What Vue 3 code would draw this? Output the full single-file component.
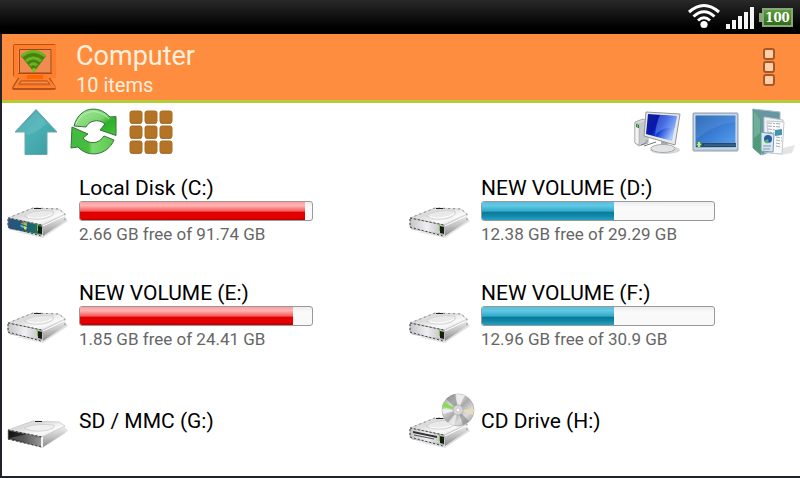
<script setup>

import { ref } from "vue";

const drives = ref([
  { name: "Local Disk (C:)", info: "2.66 GB free of 91.74 GB", used: 97, color: "red", type: "system" },
  { name: "NEW VOLUME (D:)", info: "12.38 GB free of 29.29 GB", used: 57, color: "blue", type: "hdd" },
  { name: "NEW VOLUME (E:)", info: "1.85 GB free of 24.41 GB", used: 92, color: "red", type: "hdd" },
  { name: "NEW VOLUME (F:)", info: "12.96 GB free of 30.9 GB", used: 57, color: "blue", type: "hdd" },
  { name: "SD / MMC (G:)", type: "card" },
  { name: "CD Drive (H:)", type: "cd" }
]);

</script>


<template>
  <div class="screen">
    <div class="status-bar">
      <!-- wifi -->
      <svg class="wifi" width="32" height="26" viewBox="0 0 32 26">
        <g fill="none" stroke="#fff" stroke-width="3">
          <path d="M1 9Q16 -4 31 9" />
          <path d="M5.500 13.500Q16 4 26.500 13.500" />
          <path d="M10 17.500Q16 12 22 17.500" />
        </g>
        <circle cx="16" cy="21.500" r="3.600" fill="#fff" />
      </svg>
      <!-- signal -->
      <svg class="signal" width="28" height="22" viewBox="0 0 28 22">
        <path d="M0 17h4v5h-4zM6 13h4v9h-4zM12 9h4v13h-4zM18 5h4v17h-4zM24 0h4v22h-4z" fill="#f4f4f4" />
      </svg>
      <div class="battery">100</div>
    </div>

    <div class="window">
      <header>
        <svg class="logo" width="48" height="52" viewBox="0 0 48 52">
          <g fill="none" stroke="#b5521b" stroke-width="4" stroke-linejoin="round">
            <path d="M5 5H44V34H5z" />
            <path d="M10 37L4 47H44L38 37" />
          </g>
          <path d="M6 6H44V35H6z" fill="none" stroke="#ff7d2b" stroke-width="4" />
          <path d="M9.500 8.500H41V32H9.500z" fill="#f08c50" stroke="#95481d" stroke-width="1" />
          <path d="M10 38L5 46H44L38 38z" fill="#f67426" stroke="#ff8130" stroke-width="2" />
          <path d="M11 40H37L40 43H9z" fill="#ff8b40" stroke="#b5521b" stroke-width="1" />
          <path d="M17 36h16" stroke="#ff6500" stroke-width="4" />
          <path d="M11 15Q23 5 36 15L24 31z" fill="#4a7f16" />
          <g fill="none" stroke="#69b51b" stroke-width="3">
            <path d="M12 15Q23 6 35 15" />
            <path d="M16 20Q23 14 31 20" />
            <path d="M20 24.500Q23.500 21 27 24.500" />
          </g>
          <circle cx="24" cy="29" r="2" fill="#79c51c" />
        </svg>
        <div class="heading">
          <h1>Computer</h1>
          <p>10 items</p>
        </div>
        <button class="menu-button" aria-label="Menu">
          <span></span><span></span><span></span>
        </button>
      </header>

      <nav>
        <button class="tool" aria-label="Up">
          <svg width="48" height="48" viewBox="0 0 48 48">
            <defs>
              <linearGradient id="upFill" x1="0" y1="0" x2="1" y2="1">
                <stop offset="0" stop-color="#3b8f98" />
                <stop offset=".45" stop-color="#4bb0b4" />
                <stop offset="1" stop-color="#3a9ba0" />
              </linearGradient>
            </defs>
            <path d="M24 1.500L45 24H35V46.500H13V24H3z" fill="url(#upFill)" stroke="#68a9ae" />
            <path d="M14 24H4L24 3L35 15Q25 25 14 27z" fill="#7cccd0" opacity=".35" />
          </svg>
        </button>
        <button class="tool" aria-label="Refresh">
          <svg width="48" height="48" viewBox="0 0 48 48">
            <defs>
              <linearGradient id="greenTop" x1="0" y1="0" x2="1" y2="1">
                <stop offset="0" stop-color="#a5e89d" />
                <stop offset=".5" stop-color="#7bd670" />
                <stop offset=".65" stop-color="#2eae2b" />
                <stop offset="1" stop-color="#49c43b" />
              </linearGradient>
              <linearGradient id="greenBottom" x1="0" y1="0" x2="1" y2="0">
                <stop offset="0" stop-color="#45b943" />
                <stop offset=".4" stop-color="#45bd3e" />
                <stop offset=".5" stop-color="#7bda6c" />
                <stop offset="1" stop-color="#59c84d" />
              </linearGradient>
            </defs>
            <path d="M4 18C9 -1 28 -4 40 9L46 8.500V27.500L30 22L35 16C28 10 19 13 16 19z" fill="url(#greenTop)" stroke="#36733a" stroke-linejoin="round" />
            <path d="M2 19L18 26L13 30C19 37 29 36 34 28L44 32C37 48 18 50 8 39L1 40z" fill="url(#greenBottom)" stroke="#36733a" stroke-linejoin="round" />
            <path d="M6 16C13 1 29 0 39 11" fill="none" stroke="#c4f3bd" opacity=".8" />
          </svg>
        </button>
        <button class="tool" aria-label="Grid view">
          <svg width="48" height="48" viewBox="0 0 48 48">
            <g v-for="y in [4, 19, 34]" :key="y">
              <g v-for="x in [2, 17, 32]" :key="x">
                <rect :x="x" :y="y" width="12" height="12" rx="2" fill="#96887a" />
                <rect :x="x" :y="y - 1" width="12" height="12" rx="2" fill="#b57425" stroke="#a96b25" />
              </g>
            </g>
          </svg>
        </button>

        <button class="tool right" aria-label="Computer">
          <svg width="48" height="48" viewBox="0 0 48 48">
            <defs>
              <linearGradient id="blueScreen" x1="0" y1="0" x2="1" y2=".5">
                <stop offset="0" stop-color="#10219c" />
                <stop offset=".4" stop-color="#0717ac" />
                <stop offset=".6" stop-color="#1742d5" />
                <stop offset="1" stop-color="#a7c8ff" />
              </linearGradient>
            </defs>
            <ellipse cx="31" cy="42" rx="15" ry="4" fill="#d8d8d8" />
            <path d="M1 14L9 11L14 13V35L5 38L1 35z" fill="#d8dada" stroke="#a6a8a9" />
            <path d="M5 15L14 12V35L5 38z" fill="#c6c9cb" />
            <path d="M1 15L5 16V37L1 35z" fill="#f4f4f4" stroke="#959595" stroke-width=".5" />
            <path d="M2 16l3 1v3l-3-1z" fill="#265b32" />
            <circle cx="3.500" cy="18" r="1" fill="#40e349" />
            <path d="M7 37Q14 35 13 32M10 38L22 34" fill="none" stroke="#777" stroke-width="1" />
            <path d="M27 30L34 32V40H27z" fill="#a9aaac" />
            <ellipse cx="29" cy="40.500" rx="12" ry="4" fill="#e3e4e5" stroke="#aaa" />
            <path d="M12 4L46 6L41 37L10 28z" fill="#e8e9eb" stroke="#949699" />
            <path d="M14 6L43 8L38 33L12 26z" fill="url(#blueScreen)" />
            <path d="M26 7L43 8L41 20Q30 19 23 25L21 28Q22 15 26 7z" fill="#7ea7f6" opacity=".45" />
          </svg>
        </button>
        <button class="tool" aria-label="Desktop">
          <svg width="48" height="48" viewBox="0 0 48 48">
            <defs>
              <linearGradient id="desk" x1="0" y1="0" x2="1" y2="1">
                <stop offset="0" stop-color="#1f5ca8" />
                <stop offset=".5" stop-color="#397dd4" />
                <stop offset="1" stop-color="#5ba4ee" />
              </linearGradient>
            </defs>
            <rect x="1" y="5" width="45" height="38" rx="1" fill="#b8c9da" stroke="#929dac" />
            <rect x="3" y="7" width="41" height="33" fill="url(#desk)" stroke="#dbe5ef" />
            <path d="M4 8H43V14Q23 16 4 31z" fill="#87b5eb" opacity=".2" />
            <path d="M4 35H44V39H4z" fill="#284c68" />
            <path d="M12 37H44" stroke="#47738f" />
            <circle cx="7" cy="36" r="3" fill="#4d8e75" />
            <path d="M6 34h2v2h1v1h-1v2h-2v-2h-1v-1h1z" fill="#c9e77a" />
          </svg>
        </button>
        <button class="tool" aria-label="Documents">
          <svg width="48" height="48" viewBox="0 0 48 48">
            <path d="M33 40L45 37L42 45L31 47z" fill="#e4e4e4" />
            <path d="M3 1L30 4V40L12 47z" fill="#6796a2" stroke="#9ebdc4" />
            <path d="M14 9L33 12L31 46L14 44z" fill="#eef2f5" stroke="#bac3c9" />
            <path d="M17 13L34 14L32 46L19 45z" fill="#f8fafc" stroke="#c2cacd" />
            <g stroke="#a8adb2" stroke-width="1" stroke-dasharray="4 1 2 1">
              <path d="M18 15l13 1M18 18l13 1M18 21l7 1M18 24l7 1M26 29l6 1M26 32l6 1M26 35l5 1M26 38l5 1" />
            </g>
            <path d="M25 22l7-1v6l-7 1z" fill="#4195ad" />
            <path d="M10 24L24 26L23 44L10 43z" fill="#d6e7f2" stroke="#779dba" />
            <circle cx="18" cy="31" r="4" fill="#2a5ba5" />
            <path d="M18 31l-4 2a4 4 0 0 0 5 2z" fill="#56b269" />
            <path d="M13 38h8M13 41h7" stroke="#8896a6" />
            <path d="M3 1L11 10V47L3 40z" fill="#509a7c" stroke="#699b93" />
            <path d="M4 3L10 11V25L4 30z" fill="#82b9b0" opacity=".6" />
          </svg>
        </button>
      </nav>

      <ul class="drives">
        <li v-for="drive in drives" :key="drive.name" class="drive">
          <svg class="drive-icon" width="64" height="64" viewBox="0 0 64 64">
            <defs>
              <linearGradient id="driveTop" x1="0" y1="0" x2="1" y2="1">
                <stop offset="0" stop-color="#e4e4e4" />
                <stop offset=".35" stop-color="#dcdcdc" />
                <stop offset=".65" stop-color="#fafafa" />
                <stop offset="1" stop-color="#d8d8d8" />
              </linearGradient>
              <linearGradient id="driveSide" x1="0" y1="0" x2="0" y2="1">
                <stop offset="0" stop-color="#f0f0f0" />
                <stop offset=".5" stop-color="#c4c4c4" />
                <stop offset="1" stop-color="#8c8c8c" />
              </linearGradient>
              <linearGradient id="driveFront" x1="0" y1="0" x2="1" y2="0">
                <stop offset="0" stop-color="#c4c4ca" />
                <stop offset=".5" stop-color="#f0f0f3" />
                <stop offset="1" stop-color="#bcbcc0" />
              </linearGradient>
              <linearGradient id="driveSystem" x1="0" y1="0" x2="1" y2="0">
                <stop offset="0" stop-color="#2c5280" />
                <stop offset=".5" stop-color="#14607c" />
                <stop offset="1" stop-color="#2a7058" />
              </linearGradient>
              <linearGradient id="slot" x1="0" y1="0" x2="1" y2="0">
                <stop offset="0" stop-color="#111" />
                <stop offset=".45" stop-color="#2c2c2c" />
                <stop offset="1" stop-color="#909090" />
              </linearGradient>
              <linearGradient id="disc" x1="0" y1="0" x2="1" y2="1">
                <stop offset="0" stop-color="#999" />
                <stop offset=".3" stop-color="#d9d9d9" />
                <stop offset=".5" stop-color="#aaa" />
                <stop offset=".7" stop-color="#ddd" />
                <stop offset="1" stop-color="#8c8c8c" />
              </linearGradient>
            </defs>
            <path d="M10 53L37 59L62 42L59 38L37 54z" fill="#e2e2e2" />

            <template v-if="drive.type === 'card'">
              <path d="M36 48L59 37V44L37 58z" fill="url(#driveSide)" />
              <path d="M2 41L27 32L53 33L59 37L36 48z" fill="url(#driveTop)" stroke="#aaa" stroke-width=".5" />
              <path d="M2 41L36 48V58L2 50z" fill="url(#slot)" stroke="#a0a0a0" stroke-width=".7" />
              <path d="M3 49L22 45L35 50V56.500L34 57z" fill="#ababab" opacity=".35" />
              <path d="M36 48V58" stroke="#f4f4f4" stroke-width="2" />
              <path d="M18 39Q27 34 48 36Q50 40 37 42Q25 43 18 39" fill="#efefef" stroke="#c9c9c9" stroke-width=".7" />
              <path d="M2 41L36 48M2 50L36 58" fill="none" stroke="#333" stroke-width="1" stroke-dasharray="2 2" />
              <path d="M29 32.500h7" stroke="#222" stroke-width="1" />
            </template>

            <template v-else>
              <path d="M36 46L59 35V42L37 57z" fill="url(#driveSide)" />
              <path d="M37 47L58 37" stroke="#fff" stroke-width="1" />
              <path d="M2 39L27 29L53 30L59 35L36 46z" fill="url(#driveTop)" stroke="#b4b4b4" stroke-width=".5" />
              <path d="M18 37Q26 30 47 32Q50 37 37 40Q24 41 18 37" fill="#e9e9e9" stroke="#c9c9c9" stroke-width=".7" />
              <path d="M22 38Q35 41 46 35" fill="none" stroke="#fff" stroke-width="1" />
              <path d="M3 39L35 46Q36 46 36 47V56L4 50Q2 49 2 47V40z" :fill="drive.type === 'system' ? 'url(#driveSystem)' : 'url(#driveFront)'" stroke="#a0a0a0" stroke-width=".7" />
              <path d="M2 39L36 46M2 40V48L35 57" fill="none" stroke="#444" stroke-width="1" stroke-dasharray="2 2" />
              <path d="M2 39L27 29L53 30L59 35V42" fill="none" stroke="#888" stroke-width="1" stroke-dasharray="2 3" />
              <path d="M32 47L36 48V55L32 54z" fill="#13200e" />
              <path d="M31.500 46v6" stroke="#78c53c" stroke-width="1" />
              <path d="M28 29.500h7" stroke="#222" stroke-width="1" />
            </template>

            <g v-if="drive.type === 'system'">
              <path d="M15 44l3-1v3l-3-1z" fill="#df7244" />
              <path d="M18 43l3 1v3l-3-1z" fill="#8fc256" />
              <path d="M14 46l4 1v2l-3-1z" fill="#62bde4" />
              <path d="M18 47l3 1-1 3-2-1z" fill="#f0d155" />
            </g>

            <g v-if="drive.type === 'cd'">
              <path d="M5 42L29 47V49L5 44z" fill="#333" />
              <path d="M6 46L26 50" stroke="#555" stroke-width="1" />
              <circle cx="50" cy="21" r="16" fill="url(#disc)" stroke="#a3a3a3" stroke-width=".7" />
              <path d="M50 21L38 10Q42 6 47 5z" fill="#777" opacity=".5" />
              <path d="M50 21L48 5L57 6z" fill="#f3f3f3" opacity=".8" />
              <path d="M50 21L34 18L36 13z" fill="#86df4e" />
              <path d="M50 21L35 25L34 20z" fill="#eee" />
              <path d="M50 21L40 34L46 37z" fill="#f7f7f7" opacity=".7" />
              <path d="M50 21L65 26L66 20z" fill="#e8ddb9" />
              <path d="M50 21L55 36L61 32z" fill="#777" opacity=".5" />
              <circle cx="50" cy="21" r="5" fill="#d8d8da" stroke="#aaa" stroke-width=".7" />
              <circle cx="50" cy="21" r="2" fill="#fff" stroke="#aaa" stroke-width=".5" />
            </g>
          </svg>
          <div class="details">
            <h2>{{ drive.name }}</h2>
            <div v-if="drive.info" class="bar" role="progressbar" :aria-label="drive.name" :aria-valuenow="drive.used">
              <div class="fill" :class="drive.color" :style="{ width: drive.used + '%' }"></div>
            </div>
            <p v-if="drive.info">{{ drive.info }}</p>
          </div>
        </li>
      </ul>
    </div>
  </div>
</template>

<style>
body {
  margin: 0;
  background-color: #20242a;
}
</style>

<style scoped>
.screen {
  display: flex;
  flex-direction: column;
  min-height: 100vh;
  padding-bottom: 2px;
  box-sizing: border-box;
  font-family: Roboto, "Liberation Sans", sans-serif;
}

h1,
h2,
p {
  margin: 0;
  font-weight: 400;
}

button {
  padding: 0;
  border: 0;
  background: none;
  cursor: pointer;
}

svg {
  display: block;
  overflow: visible;
}

/* status bar */

.status-bar {
  display: flex;
  justify-content: flex-end;
  align-items: center;
  gap: 6px;
  height: 34px;
  padding-right: 7px;
  background: linear-gradient(#292929, #101010 50%, #000 80%);
}

.wifi {
  margin-bottom: 2px;
}

.signal {
  margin-top: 2px;
}

.battery {
  position: relative;
  width: 27px;
  height: 15px;
  margin-left: 2px;
  border: 2px solid #8aa77c;
  background: linear-gradient(#5c9c3d, #2f6c17);
  color: #fff;
  font-family: "DejaVu Serif Condensed", "DejaVu Serif", serif;
  font-size: 13px;
  font-weight: bold;
  line-height: 15px;
  text-align: center;
}

.battery::before {
  content: "";
  position: absolute;
  left: -5px;
  top: 3px;
  width: 3px;
  height: 9px;
  background-color: #8aa77c;
}

.window {
  flex: 1;
  margin-left: 2px;
  background-color: #fff;
}

/* header */

header {
  display: flex;
  align-items: center;
  height: 66px;
  padding: 0 21px 0 8px;
  border-bottom: 3px solid #b5cb38;
  background-color: #ff8d3f;
  color: #fff0dc;
}

.heading {
  flex: 1;
  margin-left: 18px;
  padding-top: 3px;
}

h1 {
  font-size: 27px;
  line-height: 32px;
}

.heading p {
  font-size: 20px;
  line-height: 26px;
}

.menu-button {
  display: flex;
  flex-direction: column;
  gap: 1px;
  padding: 0 4px;
}

.menu-button span {
  width: 8px;
  height: 8px;
  border: 2px solid #a95823;
  border-radius: 3px;
  background-color: #ffcfac;
}

/* toolbar */

nav {
  display: flex;
  gap: 10px;
  padding: 5px 2px 0 10px;
}

.right {
  margin-left: auto;
}

/* drives */

.drives {
  display: grid;
  grid-template-columns: 1fr 1fr;
  gap: 33px 6px;
  margin: 0;
  padding: 19px 0;
  list-style: none;
}

.drive {
  display: flex;
  align-items: center;
  gap: 9px;
  min-height: 72px;
  padding-left: 4px;
}

.drive-icon {
  flex: none;
}

.details {
  flex: 1;
}

h2 {
  color: #000;
  font-size: 21px;
  line-height: 26px;
}

.bar {
  width: 59%;
  height: 20px;
  box-sizing: border-box;
  max-width: 320px;
  min-width: 234px;
  border: 1px solid #999;
  border-radius: 3px;
  background: linear-gradient(#ededed, #fafafa 30%, #f8f8f8);
  overflow: hidden;
}

.fill {
  height: 100%;
}

.red {
  background: linear-gradient(#ff9c9c, #ffb5b5 20%, #f65c5c 50%, #df0000 58%, #e60000 85%, #bd0000);
}

.blue {
  background: linear-gradient(#5dbdd9, #60c9e5 20%, #36a9c9 50%, #087b9d 58%, #1689aa 80%, #21a4c5);
}

.details p {
  color: #666;
  font-size: 17px;
  line-height: 26px;
}
</style>
